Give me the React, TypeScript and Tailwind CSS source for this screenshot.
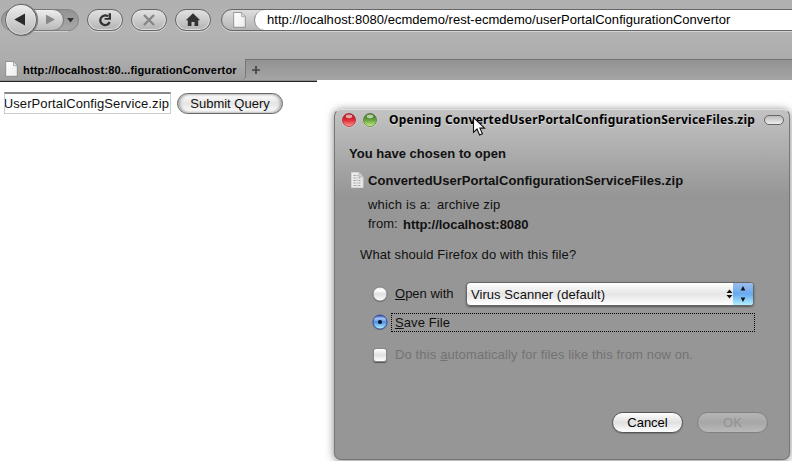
import React from "react";

function PageIcon({ className = "" }: { className?: string }) {
  return (
    <svg className={className} width="13" height="16" viewBox="0 0 13 16">
      <defs>
        <linearGradient id="pg" x1="0" y1="0" x2="1" y2="1">
          <stop offset="0" stopColor="#fff" />
          <stop offset="1" stopColor="#ececec" />
        </linearGradient>
      </defs>
      <path d="M.7 .5h7.8l3.8 4V15.3H.7z" fill="url(#pg)" stroke="#777" strokeWidth=".7" />
      <path d="M8.5 .7v4H12" fill="#ddd" stroke="#999" strokeWidth=".7" />
    </svg>
  );
}

function RoundButton({ children }: { children: React.ReactNode }) {
  return (
    <div className="flex h-[22px] w-9 shrink-0 items-center justify-center rounded-full border border-[#666] bg-linear-to-b from-[#e2e2e2] via-[#cbcbcb] to-[#b2b2b2] shadow-[0_1px_0_#d4d4d4,inset_0_0_1px_1px_#dedede]">
      {children}
    </div>
  );
}

function BackForward() {
  return (
    <svg className="shrink-0" width="80" height="38" viewBox="0 0 80 38">
      <defs>
        <linearGradient id="bk" x1="0" y1="0" x2="0" y2="1">
          <stop offset="0" stopColor="#efefef" />
          <stop offset=".5" stopColor="#d2d2d2" />
          <stop offset="1" stopColor="#b8b8b8" />
        </linearGradient>
        <linearGradient id="dd" x1="0" y1="0" x2="0" y2="1">
          <stop offset="0" stopColor="#929292" />
          <stop offset="1" stopColor="#a9a9a9" />
        </linearGradient>
      </defs>
      <rect x="1.5" y="9.5" width="77" height="21" rx="10.5" fill="url(#dd)" stroke="#858585" />
      <path d="M10 31.5H68" stroke="#d0d0d0" />
      <path d="M34 9.5H53a10.5 10.5 0 0 1 0 21H34z" fill="url(#bk)" stroke="#777" />
      <circle cx="22" cy="20" r="16.2" fill="#858585" />
      <circle cx="21" cy="19.8" r="15.5" fill="url(#bk)" stroke="#5d5d5d" />
      <circle cx="21" cy="19.8" r="14.5" fill="none" stroke="#e4e4e4" strokeOpacity=".7" />
      <path d="M14.3 19.6L25 13.6V25.6z" fill="#2b2b2b" />
      <path d="M55 19.6L46 14.8V24.4z" fill="#888" />
      <path d="M67 18h7l-3.5 4.5z" fill="#333" />
    </svg>
  );
}

function Orb({ color }: { color: "red" | "green" }) {
  const red = color === "red";
  const id = "orb-" + color;
  return (
    <svg width="16" height="16" viewBox="0 0 16 16">
      <defs>
        <linearGradient id={id} x1="0" y1="0" x2="0" y2="1">
          <stop offset="0" stopColor={red ? "#a81420" : "#386b1b"} />
          <stop offset=".5" stopColor={red ? "#e02a36" : "#67a23f"} />
          <stop offset="1" stopColor={red ? "#ff9a94" : "#c9f28c"} />
        </linearGradient>
      </defs>
      <circle cx="8" cy="8.4" r="7.2" fill="#ddd" />
      <circle cx="8" cy="8" r="6.6" fill={`url(#${id})`} stroke={red ? "#9a2b32" : "#50743a"} strokeWidth=".7" />
      <ellipse cx="8" cy="4.3" rx="3.3" ry="1.9" fill="#fff" fillOpacity=".6" />
    </svg>
  );
}

function Radio({ checked = false }: { checked?: boolean }) {
  const id = checked ? "r-on" : "r-off";
  return (
    <svg className="shrink-0" width="16" height="17" viewBox="0 0 16 17">
      <defs>
        <linearGradient id={id} x1="0" y1="0" x2="0" y2="1">
          <stop offset="0" stopColor={checked ? "#2c46a8" : "#e9e9e9"} />
          <stop offset=".25" stopColor={checked ? "#a5c3f2" : "#fff"} />
          <stop offset=".5" stopColor={checked ? "#4f92e4" : "#dedede"} />
          <stop offset="1" stopColor={checked ? "#b7f3ff" : "#fff"} />
        </linearGradient>
      </defs>
      <circle cx="8" cy="8.8" r="7.5" fill="#777" />
      <circle cx="8" cy="8" r="7" fill={`url(#${id})`} stroke={checked ? "#26409c" : "#777"} strokeWidth=".8" />
      {checked && <circle cx="8" cy="8" r="2.1" fill="#0b1528" />}
    </svg>
  );
}

function Browser() {
  return (
    <header className="h-20 bg-[#b0b0b0] font-['Liberation_Sans',sans-serif]">
      <div className="flex h-[59px] items-start bg-linear-to-b from-[#b0b0b0] via-[#b3b3b3] to-[#adadad]">
        <BackForward />
        <div className="mt-[9px] ml-[7px] flex min-w-0 flex-1 gap-2">
          <RoundButton>
            <svg width="16" height="16" viewBox="0 0 16 16">
              <path d="M11 4.4A4.8 4.8 0 1 0 12.6 10" fill="none" stroke="#333" strokeWidth="2.3" />
              <path d="M14 1.2V7.8H7.6V6L11.6 6V1.2z" fill="#333" />
            </svg>
          </RoundButton>
          <RoundButton>
            <svg width="14" height="14" viewBox="0 0 14 14">
              <path d="M2 2L12 12M12 2L2 12" stroke="#858585" strokeWidth="2.3" />
            </svg>
          </RoundButton>
          <RoundButton>
            <svg width="16" height="16" viewBox="0 0 16 16">
              <path d="M8 1.2L15.2 8.2H13.2V14H9.5V10H6.5V14H2.8V8.2H.8z" fill="#333" />
            </svg>
          </RoundButton>
          <div className="-mr-3 ml-[2px] flex h-[22px] flex-1 overflow-hidden rounded-l-full border border-[#666] bg-linear-to-b from-[#dedede] to-[#b5b5b5] shadow-[0_1px_0_#d4d4d4]">
            <PageIcon className="mt-[2px] ml-[11px] shrink-0" />
            <div className="ml-[8px] flex flex-1 items-center rounded-l-full border-l border-[#888] bg-white pl-3 text-[13px] tracking-[0.03px] whitespace-nowrap text-black">
              http://localhost:8080/ecmdemo/rest-ecmdemo/userPortalConfigurationConvertor
            </div>
          </div>
        </div>
      </div>
      <div className="flex h-[21px]">
        <div className="flex w-[246px] shrink-0 items-center rounded-br border-r border-[#777] bg-linear-to-b from-[#adadad] to-[#9f9f9f] pl-[5px]">
          <PageIcon className="-mt-px" />
          <span className="mt-px ml-[5px] text-[11px] font-bold tracking-[0.16px] whitespace-nowrap text-black">
            http://localhost:80...figurationConvertor
          </span>
        </div>
        <div className="flex flex-1 items-center border-t border-[#737373] bg-linear-to-b from-[#929292] to-[#a5a5a5] pl-[5px]">
          <svg width="10" height="10" viewBox="0 0 10 10">
            <path d="M1 5H9M5 1V9" stroke="#444" strokeWidth="1.7" />
          </svg>
        </div>
      </div>
    </header>
  );
}

function PageForm() {
  return (
    <main>
      <div className="h-[2px] w-[317px] border-b border-[#222] bg-[#8f8f8f]" />
      <div className="flex pt-[10px] pl-1 font-['Liberation_Sans',sans-serif] text-[13px] text-[#111]">
        <div className="flex h-[22px] w-[167px] items-center justify-end overflow-hidden border border-t-2 border-[#ccc] border-t-[#888] pr-px tracking-[0.1px] whitespace-nowrap">
          UserPortalConfigService.zip
        </div>
        <div className="mt-px ml-[6px] flex h-[21px] w-[106px] items-center justify-center rounded-full border border-[#666] bg-linear-to-b from-white via-[#e5e5e5] to-white whitespace-nowrap shadow-[inset_2px_0_3px_#aaa,inset_-2px_0_3px_#aaa]">
          Submit Query
        </div>
      </div>
    </main>
  );
}

function Dialog() {
  return (
    <section className="absolute top-[109px] left-[334px] h-[351px] w-[456px] rounded-[7px] border border-[#777] border-t-[#ddd] bg-[#969696] bg-linear-to-b from-[#c3c3c3] from-0% to-[#969696] to-[85px] font-['Liberation_Sans',sans-serif] text-[13px] leading-4 whitespace-nowrap text-[#111] shadow-[0_1px_9px_rgba(0,0,0,0.5)]">
      <div className="flex h-5 items-center pl-[6px]">
        <Orb color="red" />
        <div className="ml-[5px] flex">
          <Orb color="green" />
        </div>
        <h1 className="ml-[11px] w-[367px] font-['Noto_Sans','Open_Sans',sans-serif] text-[12px] font-bold tracking-[0.22px] text-black [text-shadow:0_1px_0_#ddd]">
          Opening ConvertedUserPortalConfigurationServiceFiles.zip
        </h1>
        <div className="ml-[8px] h-[10px] w-5 shrink-0 rounded-full border border-[#666] bg-linear-to-b from-[#bbb] to-[#eee]" />
      </div>
      <h2 className="mt-4 ml-[14px] font-bold tracking-[0.02px]">You have chosen to open</h2>
      <div className="mt-[10px] ml-4 flex h-[18px]">
        <svg width="13" height="17" viewBox="0 0 13 17">
          <path d="M.5 .5H8L12 5V15.5H.5z" fill="#ececec" stroke="#d5d5d5" />
          <path d="M8 .5V5H12" fill="#ccc" stroke="#bbb" />
          <path d="M2.5 3.5H7M2.5 6H10M2.5 8.5H10M2.5 11H10M2.5 13.5H10" stroke="#999" strokeDasharray="2 1 1 1" />
        </svg>
        <b className="mt-px ml-1 tracking-[0.05px]">ConvertedUserPortalConfigurationServiceFiles.zip</b>
      </div>
      <div className="mt-[7px] ml-[33px] flex">
        <span className="w-[69px] tracking-[0.2px]">which is a:</span>
        <span className="tracking-[0.1px]">archive zip</span>
      </div>
      <div className="mt-[3px] ml-[33px] flex">
        <span className="w-[35px]">from:</span>
        <b className="mt-px tracking-[-0.05px]">http://localhost:8080</b>
      </div>
      <p className="mt-[14px] ml-[25px] tracking-[0.12px]">What should Firefox do with this file?</p>
      <div className="mt-[19px] ml-[37px] flex h-6 items-center">
        <Radio />
        <span className="ml-[7px] w-[71px]"><u>O</u>pen with</span>
        <div className="flex h-6 w-[288px] items-center overflow-hidden rounded-[4px] border border-[#666] bg-linear-to-b from-white via-[#e5e5e5] to-white shadow-[0_1px_2px_#555]">
          <span className="mt-px ml-1 flex-1 tracking-[0.06px]">Virus Scanner (default)</span>
          <svg width="7" height="10" viewBox="0 0 7 10">
            <path d="M3.5 .5L6.5 4H.5zM3.5 9.5L.5 6H6.5z" fill="#111" />
          </svg>
          <div className="flex h-full w-5 items-center justify-center bg-linear-to-b from-[#9bbdec] via-[#67a9ef] to-[#b4f0ff]">
            <svg width="6" height="18" viewBox="0 0 6 18">
              <path d="M3 1L5.3 5.5H.7zM3 17L.7 12.5H5.3z" fill="#111" />
            </svg>
          </div>
        </div>
      </div>
      <div className="mt-[7px] ml-[37px] flex h-[19px] items-center">
        <Radio checked />
        <div className="ml-[3px] flex h-[19px] w-[364px] items-center border border-dotted border-black pl-[3px]">
          <span className="tracking-[0.1px]"><u>S</u>ave File</span>
        </div>
      </div>
      <div className="mt-[15px] ml-[37px] flex items-center text-[#737373]">
        <div className="ml-px h-[14px] w-[14px] rounded-[3px] border border-[#888] bg-linear-to-b from-white via-[#e0e0e0] to-white shadow-[0_1px_1px_#555]" />
        <span className="ml-2 tracking-[0.13px]">Do this <u>a</u>utomatically for files like this from now on.</span>
      </div>
      <div className="mt-[49px] ml-[277px] flex gap-[14px]">
        <div className="flex h-[21px] w-[71px] items-center justify-center rounded-full border border-[#555] bg-linear-to-b from-white via-[#e0e0e0] to-white text-black shadow-[0_1px_1px_#777]">Cancel</div>
        <div className="flex h-[21px] w-[71px] items-center justify-center rounded-full border border-[#808080] bg-linear-to-b from-[#b5b5b5] via-[#a7a7a7] to-[#b9b9b9] text-[#929292]">OK</div>
      </div>
    </section>
  );
}

function Pointer() {
  return (
    <svg className="absolute top-[116px] left-[472px]" width="15" height="22" viewBox="0 0 15 22">
      <path d="M1.5 1.5V16.3L5 13L7.6 19L10.4 17.8L7.9 12.1H12.5z" fill="#fff" stroke="#111" strokeWidth="1.1" />
    </svg>
  );
}

export default function App() {
  return (
    <div className="relative h-[461px] w-[792px] overflow-hidden bg-white">
      <Browser />
      <PageForm />
      <Dialog />
      <Pointer />
    </div>
  );
}
